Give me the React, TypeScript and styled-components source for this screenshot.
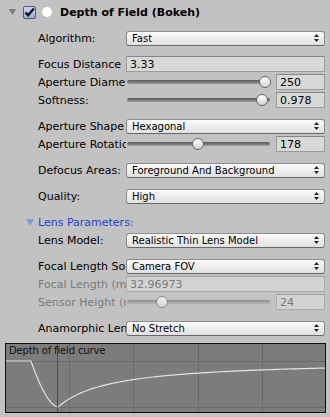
import React from 'react';
import styled, { createGlobalStyle } from 'styled-components';

const GlobalStyle = createGlobalStyle`
  html, body { margin: 0; padding: 0; background: #c2c2c2; }
  body {
    width: 330px; height: 417px; overflow: hidden;
    font-family: "DejaVu Sans", "Liberation Sans", sans-serif;
    font-size: 11px; color: #000;
  }
`;

const Panel = styled.div`
  display: flex;
  flex-direction: column;
  width: 330px;
  height: 417px;
  background: #c2c2c2;
`;

const Header = styled.div`
  display: flex;
  align-items: center;
  height: 24px;
  padding-left: 9px;
`;

const Fold = styled.svg`
  flex: none;
  display: block;
`;

const Check = styled.div`
  width: 13px;
  height: 13px;
  box-sizing: border-box;
  margin-left: 7px;
  border: 1px solid #4f5b76;
  border-radius: 2px;
  background: linear-gradient(#c9d3e8, #9eadcc);
  display: flex;
  align-items: center;
  justify-content: center;
`;

const Dot = styled.div`
  width: 10px;
  height: 10px;
  margin-left: 6px;
  border-radius: 50%;
  background: #fff;
`;

const Title = styled.div`
  margin-left: 8px;
  font-weight: bold;
  font-size: 11px;
  color: #000;
  white-space: nowrap;
`;

const Spacer = styled.div<{ $h: number }>`
  height: ${(p) => p.$h}px;
  flex: none;
`;

const Row = styled.div<{ $indent?: number }>`
  display: flex;
  align-items: center;
  height: 18px;
  flex: none;
  padding: 0 5px 0 ${(p) => p.$indent ?? 38}px;
`;

const Label = styled.div<{ $disabled?: boolean }>`
  width: 88px;
  flex: none;
  overflow: hidden;
  white-space: nowrap;
  color: ${(p) => (p.$disabled ? '#7a7a7a' : '#000')};
`;

const Select = styled.div`
  flex: 1;
  height: 15px;
  box-sizing: border-box;
  display: flex;
  align-items: center;
  justify-content: space-between;
  padding: 0 5px;
  border: 1px solid #8c8c8c;
  border-bottom-color: #686868;
  border-radius: 3px;
  background: linear-gradient(#fbfbfb, #e0e0e0);
  font-size: 10px;
  color: #000;
  white-space: nowrap;
`;

const Field = styled.div<{ $disabled?: boolean; $width?: number }>`
  ${(p) => (p.$width ? `width: ${p.$width}px; flex: none;` : 'flex: 1;')}
  height: 16px;
  box-sizing: border-box;
  display: flex;
  align-items: center;
  padding-left: 3px;
  border: 1px solid ${(p) => (p.$disabled ? '#acacac' : '#9c9c9c')};
  border-top-color: ${(p) => (p.$disabled ? '#a4a4a4' : '#858585')};
  background: ${(p) => (p.$disabled ? '#d2d2d2' : '#d8d8d8')};
  color: ${(p) => (p.$disabled ? '#7a7a7a' : '#000')};
  font-size: 11px;
`;

const SliderWrap = styled.div`
  flex: 1;
  display: flex;
  align-items: center;
`;

const Track = styled.div<{ $disabled?: boolean }>`
  flex: 1;
  position: relative;
  height: 16px;
  margin-right: 5px;
  &::before {
    content: '';
    position: absolute;
    left: 1px;
    right: 1px;
    top: 6px;
    height: 4px;
    border-radius: 2px;
    background: ${(p) =>
      p.$disabled
        ? 'linear-gradient(#8a8a8a, #a6a6a6 60%, #b6b6b6)'
        : 'linear-gradient(#5a5a5a, #7e7e7e 60%, #a4a4a4)'};
  }
`;

const Knob = styled.div<{ $frac: number; $disabled?: boolean }>`
  position: absolute;
  top: 2px;
  left: calc(${(p) => p.$frac} * (100% - 12px));
  width: 12px;
  height: 12px;
  box-sizing: border-box;
  border-radius: 50%;
  border: 1px solid ${(p) => (p.$disabled ? '#8c8c8c' : '#666')};
  background: ${(p) =>
    p.$disabled ? 'linear-gradient(#f0f0f0, #d4d4d4)' : 'linear-gradient(#ffffff, #d2d2d2)'};
`;

const FoldLabel = styled.div`
  color: #2443d4;
  margin-left: 4px;
  white-space: nowrap;
`;

const CurveBox = styled.div`
  position: relative;
  height: 70px;
  margin: 0 4px 0 5px;
  box-sizing: border-box;
  border: 1px solid #111;
  background: #7c7c7c;
  flex: none;
`;

const CurveSvg = styled.svg`
  display: block;
`;

const CurveTitle = styled.div`
  position: absolute;
  left: 3px;
  top: 1px;
  font-size: 10px;
  letter-spacing: -0.15px;
  color: #111;
  white-space: nowrap;
`;

const Arrows = () => (
  <svg width="5" height="8" viewBox="0 0 5 8">
    <polygon points="2.5,0 5,3 0,3" fill="#222" />
    <polygon points="0,5 5,5 2.5,8" fill="#222" />
  </svg>
);

const Dropdown = ({ value }: { value: string }) => (
  <Select>
    <span>{value}</span>
    <Arrows />
  </Select>
);

const Slider = ({ frac, value, disabled }: { frac: number; value: string; disabled?: boolean }) => (
  <SliderWrap>
    <Track $disabled={disabled}>
      <Knob $frac={frac} $disabled={disabled} />
    </Track>
    <Field $width={49} $disabled={disabled}>{value}</Field>
  </SliderWrap>
);

const buildCurve = () => {
  const pts: string[] = ['M0 17', 'L25 17'];
  for (let i = 1; i <= 24; i++) {
    const t = i / 24;
    const x = 25 + 27 * t;
    const y = 17 + 46 * (1 - Math.pow(1 - t, 1.7));
    pts.push(`L${x.toFixed(2)} ${y.toFixed(2)}`);
  }
  for (let x = 53; x <= 320; x += 2) {
    const d = x - 52;
    const y = 63 - (46.7 * d) / (d + 53);
    pts.push(`L${x} ${y.toFixed(2)}`);
  }
  return pts.join(' ');
};

export default function App() {
  const curve = buildCurve();
  return (
    <>
      <GlobalStyle />
      <Panel>
        <Header>
          <Fold width="7" height="6" viewBox="0 0 7 6">
            <polygon points="0,0 7,0 3.5,6" fill="#7b7b7b" />
          </Fold>
          <Check>
            <svg width="11" height="11" viewBox="0 0 11 11">
              <path d="M1.5 5.5 L4.2 8.3 L9.8 1.5" fill="none" stroke="#0a0f22" strokeWidth="2.2" />
            </svg>
          </Check>
          <Dot />
          <Title>Depth of Field (Bokeh)</Title>
        </Header>
        <Spacer $h={5} />
        <Row>
          <Label>Algorithm:</Label>
          <Dropdown value="Fast" />
        </Row>
        <Spacer $h={8} />
        <Row>
          <Label>Focus Distance</Label>
          <Field>3.33</Field>
        </Row>
        <Row>
          <Label>Aperture Diameter</Label>
          <Slider frac={1} value="250" />
        </Row>
        <Row>
          <Label>Softness:</Label>
          <Slider frac={0.978} value="0.978" />
        </Row>
        <Spacer $h={8} />
        <Row>
          <Label>Aperture Shape</Label>
          <Dropdown value="Hexagonal" />
        </Row>
        <Row>
          <Label>Aperture Rotation</Label>
          <Slider frac={178 / 360} value="178" />
        </Row>
        <Spacer $h={8} />
        <Row>
          <Label>Defocus Areas:</Label>
          <Dropdown value="Foreground And Background" />
        </Row>
        <Spacer $h={8} />
        <Row>
          <Label>Quality:</Label>
          <Dropdown value="High" />
        </Row>
        <Spacer $h={8} />
        <Row $indent={26}>
          <Fold width="8" height="7" viewBox="0 0 8 7">
            <polygon points="0,0 8,0 4,7" fill="#8497e2" />
          </Fold>
          <FoldLabel>Lens Parameters:</FoldLabel>
        </Row>
        <Row>
          <Label>Lens Model:</Label>
          <Dropdown value="Realistic Thin Lens Model" />
        </Row>
        <Spacer $h={8} />
        <Row>
          <Label>Focal Length Source</Label>
          <Dropdown value="Camera FOV" />
        </Row>
        <Row>
          <Label $disabled>Focal Length (mm)</Label>
          <Field $disabled>32.96973</Field>
        </Row>
        <Row>
          <Label $disabled>Sensor Height (mm)</Label>
          <Slider frac={0.225} value="24" disabled />
        </Row>
        <Spacer $h={8} />
        <Row>
          <Label>Anamorphic Lens</Label>
          <Dropdown value="No Stretch" />
        </Row>
        <Spacer $h={6} />
        <CurveBox>
          <CurveSvg width="319" height="68" viewBox="0 0 319 68">
            <g stroke="#6a6a6a" strokeWidth="1">
              <line x1="63.5" y1="0" x2="63.5" y2="68" />
              <line x1="127.5" y1="0" x2="127.5" y2="68" />
              <line x1="192.5" y1="0" x2="192.5" y2="68" />
              <line x1="256.5" y1="0" x2="256.5" y2="68" />
              <line x1="0" y1="17.5" x2="319" y2="17.5" />
              <line x1="0" y1="63.5" x2="319" y2="63.5" />
            </g>
            <path d={curve} fill="none" stroke="#e2e2e2" strokeWidth="1.2" />
            <line x1="51.5" y1="0" x2="51.5" y2="68" stroke="#d81414" strokeWidth="1" />
          </CurveSvg>
          <CurveTitle>Depth of field curve</CurveTitle>
        </CurveBox>
      </Panel>
    </>
  );
}
